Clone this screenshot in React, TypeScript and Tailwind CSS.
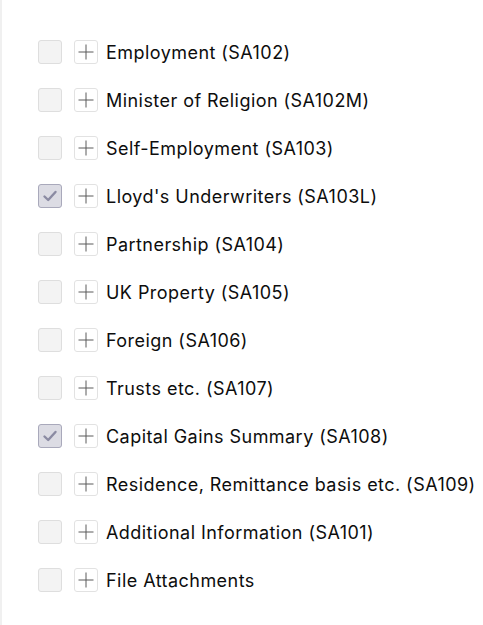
import { useState } from 'react';

const ITEMS: { label: string; checked: boolean }[] = [
    { label: 'Employment (SA102)', checked: false },
    { label: 'Minister of Religion (SA102M)', checked: false },
    { label: 'Self-Employment (SA103)', checked: false },
    { label: "Lloyd's Underwriters (SA103L)", checked: true },
    { label: 'Partnership (SA104)', checked: false },
    { label: 'UK Property (SA105)', checked: false },
    { label: 'Foreign (SA106)', checked: false },
    { label: 'Trusts etc. (SA107)', checked: false },
    { label: 'Capital Gains Summary (SA108)', checked: true },
    { label: 'Residence, Remittance basis etc. (SA109)', checked: false },
    { label: 'Additional Information (SA101)', checked: false },
    { label: 'File Attachments', checked: false },
];

function CheckBox({ checked, onToggle }: { checked: boolean; onToggle: () => void }) {
    return (
        <button
            onClick={onToggle}
            className={
                checked
                    ? 'w-6 h-6 rounded-[3px] border border-[#a9a9bb] bg-[#dcdce4] flex items-center justify-center'
                    : 'w-6 h-6 rounded-[3px] border border-[#dedede] bg-[#f3f3f3] flex items-center justify-center'
            }
        >
            {checked && (
                <svg width="16" height="16" viewBox="0 0 16 16" fill="none">
                    <path d="M2.5 8.5 L6.2 12 L13.5 4" stroke="#8b8ba3" strokeWidth="2.4" strokeLinecap="round" strokeLinejoin="round" />
                </svg>
            )}
        </button>
    );
}

function ExpandBox() {
    return (
        <div className="w-6 h-6 rounded-[3px] border border-[#e2e2e2] bg-white flex items-center justify-center">
            <svg width="16" height="16" viewBox="0 0 16 16">
                <path d="M8 0.5 V15.5 M0.5 8 H15.5" stroke="#5a5a5a" strokeWidth="1" />
            </svg>
        </div>
    );
}

export default function App() {
    const [items, setItems] = useState(ITEMS);

    return (
        <div
            className="min-h-[625px] w-[483px] bg-white border-l-2 border-[#f0f0f0] pt-10 pl-9"
            style={{ fontFamily: 'Inter, "Liberation Sans", Arial, sans-serif' }}
        >
            <div className="flex flex-col gap-6">
                {items.map((item, i) => (
                    <div key={item.label} className="flex items-center h-6">
                        <CheckBox
                            checked={item.checked}
                            onToggle={() =>
                                setItems(items.map((it, j) => (j === i ? { ...it, checked: !it.checked } : it)))
                            }
                        />
                        <div className="ml-3">
                            <ExpandBox />
                        </div>
                        <span className="ml-2 mt-px text-[18px] text-[#0d0d0d] tracking-[0.45px] whitespace-nowrap">
                            {item.label}
                        </span>
                    </div>
                ))}
            </div>
        </div>
    );
}
